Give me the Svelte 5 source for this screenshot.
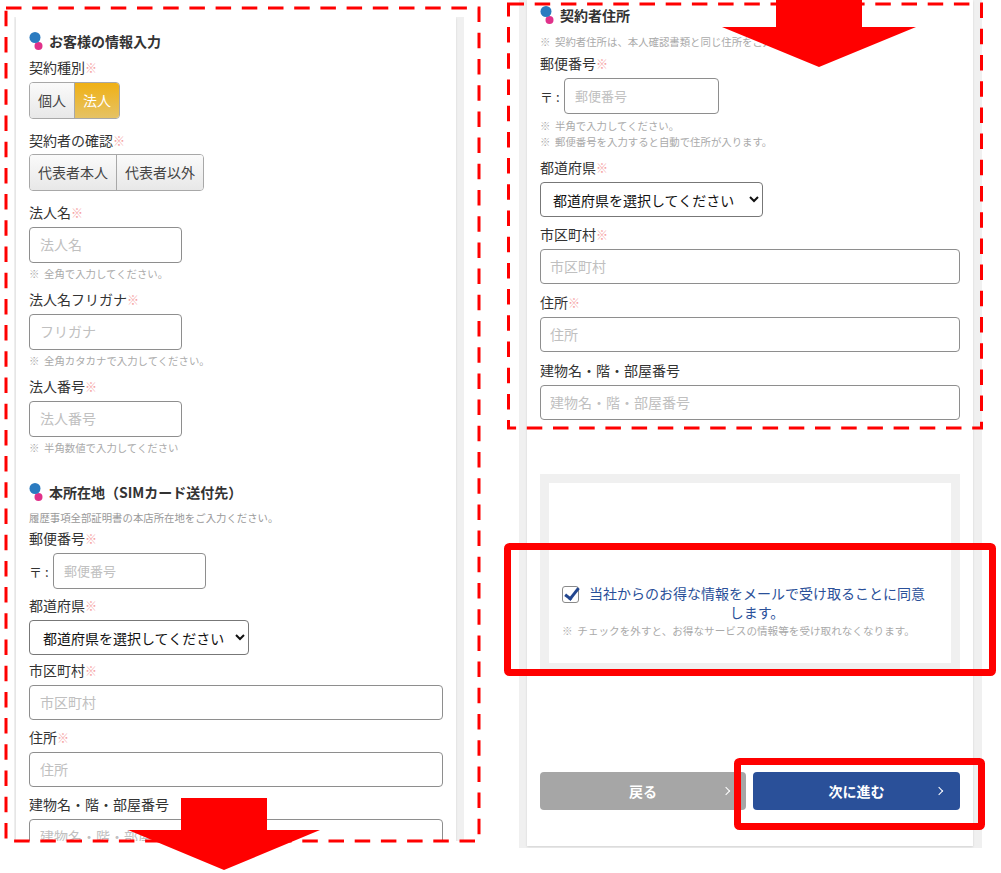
<script>
  let agreed = $state(true);
  let contractType = $state('corp');
</script>

{#snippet mark()}
  <svg class="mark" width="14" height="18" viewBox="0 0 14 18" aria-hidden="true">
    <circle cx="9.5" cy="14" r="4" fill="#e0318a" />
    <circle cx="6" cy="5.5" r="5.5" fill="#2b7bc0" />
  </svg>
{/snippet}

{#snippet heading(text)}
  <h2 class="heading">{@render mark()}{text}</h2>
{/snippet}

{#snippet label(text, required = true)}
  <div class="label">{text}{#if required}<span class="req">※</span>{/if}</div>
{/snippet}

{#snippet prefecture()}
  <select class="pref">
    <option>都道府県を選択してください</option>
  </select>
{/snippet}

{#snippet address()}
  {@render label('市区町村')}
  <input class="text" placeholder="市区町村" />
  {@render label('住所')}
  <input class="text" placeholder="住所" />
  {@render label('建物名・階・部屋番号', false)}
  <input class="text" placeholder="建物名・階・部屋番号" />
{/snippet}

<div class="page">
  <section class="panel left">
    <div class="sheet">
      {@render heading('お客様の情報入力')}
      {@render label('契約種別')}
      <div class="toggle">
        <button class:on={contractType === 'personal'} onclick={() => contractType = 'personal'}>個人</button>
        <button class:on={contractType === 'corp'} onclick={() => contractType = 'corp'}>法人</button>
      </div>
      <div class="label gap">契約者の確認<span class="req">※</span></div>
      <div class="toggle">
        <button>代表者本人</button>
        <button>代表者以外</button>
      </div>
      <div class="label gap wide">法人名<span class="req">※</span></div>
      <input class="text short" placeholder="法人名" />
      <p class="note">※&nbsp; 全角で入力してください。</p>
      {@render label('法人名フリガナ')}
      <input class="text short" placeholder="フリガナ" />
      <p class="note">※&nbsp; 全角カタカナで入力してください。</p>
      {@render label('法人番号')}
      <input class="text short" placeholder="法人番号" />
      <p class="note">※&nbsp; 半角数値で入力してください</p>

      <div class="section">
        {@render heading('本所在地（SIMカード送付先）')}
        <p class="note lead">履歴事項全部証明書の本店所在地をご入力ください。</p>
        {@render label('郵便番号')}
        <div class="zip">
          <span>〒 :</span>
          <input class="text short" placeholder="郵便番号" />
        </div>
        {@render label('都道府県')}
        {@render prefecture()}
        {@render address()}
      </div>
    </div>
  </section>

  <section class="panel right">
    <div class="sheet">
      {@render heading('契約者住所')}
      <p class="note lead">※&nbsp; 契約者住所は、本人確認書類と同じ住所をご入力ください。</p>
      {@render label('郵便番号')}
      <div class="zip">
        <span>〒 :</span>
        <input class="text short" placeholder="郵便番号" />
      </div>
      <p class="note first">※&nbsp; 半角で入力してください。</p>
      <p class="note">※&nbsp; 郵便番号を入力すると自動で住所が入ります。</p>
      {@render label('都道府県')}
      {@render prefecture()}
      {@render address()}

      <div class="optin">
        <div class="optin-inner">
          <label class="agree">
            <input type="checkbox" bind:checked={agreed} />
            <span>当社からのお得な情報をメールで受け取ることに同意します。</span>
          </label>
          <p class="note optin-note">※&nbsp; チェックを外すと、お得なサービスの情報等を受け取れなくなります。</p>
        </div>
      </div>

      <div class="actions">
        <button class="step back">戻る<span class="chev"></span></button>
        <button class="step next">次に進む<span class="chev"></span></button>
      </div>
    </div>
  </section>

  <!-- annotations drawn over the screenshot -->
  <svg class="marks" width="1001" height="873" viewBox="0 0 1001 873" aria-hidden="true">
    <rect x="6" y="8" width="473" height="833" fill="none" stroke="#f00" stroke-width="3" stroke-dasharray="15.5 10.7" />
    <rect x="508.500" y="4" width="473" height="424" fill="none" stroke="#f00" stroke-width="3" stroke-dasharray="15.5 10.7" />
    <rect x="507.500" y="546.500" width="485" height="126" rx="2" fill="none" stroke="#f00" stroke-width="7" />
    <rect x="737.500" y="761.500" width="244" height="65" rx="2" fill="none" stroke="#f00" stroke-width="7" />
    <polygon points="181,798 267,798 267,830 320,830 224,870 128,830 181,830" fill="#f00" />
    <polygon points="776,0 862,0 862,27 916,27 819,67 722,27 776,27" fill="#f00" />
  </svg>
</div>

<style>
  :global(body) { background: #fff; }
  .page { position: relative; display: flex; align-items: flex-start; width: 1001px; height: 873px; overflow: hidden; font-family: "Noto Sans CJK JP", "Noto Sans", sans-serif; font-size: 14px; color: #333; }

  .panel { background: #f0f0f0; overflow: hidden; box-sizing: border-box; }
  .panel.left { margin: 17px 0 0 14px; width: 450px; height: 824px; padding: 0 8px 0 2px; }
  .panel.right { margin-left: 55px; width: 463px; height: 848px; padding: 0 9px 2px 8px; }
  .sheet { background: #fff; height: 100%; box-sizing: border-box; box-shadow: 0 1px 2px rgba(0,0,0,0.12); }
  .left .sheet { padding: 14px 13px 0 13px; }
  .right .sheet { padding: 5px 13px 0 13px; }

  .heading { display: flex; align-items: center; height: 20px; margin: 0 0 6px; font-size: 14px; font-weight: 700; line-height: 20px; color: #333; }
  .mark { margin-right: 6px; flex: none; }
  .section { margin-top: 27px; }

  .label { height: 20px; line-height: 20px; margin-bottom: 5px; white-space: nowrap; }
  .label.gap { margin-top: 11px; margin-bottom: 4px; }
  .label.gap.wide { margin-bottom: 5px; }
  .req { color: #f5a3a3; font-size: 12px; }

  .toggle { display: inline-flex; vertical-align: top; height: 37px; border: 1px solid #a8a8a8; border-radius: 4px; box-sizing: border-box; overflow: hidden; }
  .toggle button { padding: 0 8px 2px; font: inherit; color: #444; background: linear-gradient(#fafafa, #e8e8e8); border: 0; border-left: 1px solid #a8a8a8; cursor: pointer; }
  .toggle button:first-child { border-left: 0; }
  .toggle button.on { color: #fff; background: linear-gradient(#f0b115, #e5c265); }

  .text { display: block; width: 100%; height: 35px; margin-bottom: 7px; padding: 0 10px 2px; box-sizing: border-box; font: inherit; color: #333; background: #fff; border: 1px solid #8e8e8e; border-radius: 4px; outline: none; }
  .right .text { margin-bottom: 8px; padding: 0 9px 2px; }
  .text::placeholder { color: #c0c0c0; }
  .text.short, .right .text.short { width: 153px; height: 36px; margin-bottom: 0; padding: 0 10px 2px; }
  .right .text.short { width: 155px; }

  .zip { display: flex; align-items: center; gap: 4px; margin-bottom: 6px; font-size: 13px; }
  .right .zip { margin-bottom: 0; }
  .zip span { width: 20px; white-space: nowrap; }

  .pref { display: block; width: 220px; height: 35px; margin: 1px 0 5px; padding: 0 0 0 9px; font: inherit; color: #111; background: #fff; border: 1px solid #777; border-radius: 4px; }
  .right .pref { width: 223px; margin: 0 0 7px; padding-left: 8px; }

  .note { margin: 4px 0 8px; height: 14px; font-size: 10.4px; line-height: 14px; color: #aaa; white-space: nowrap; }
  .note.lead { margin: 9px 0 3px; }
  .right .note.lead { margin: 10px 0 4px; }
  .right .note.first { margin: 5px 0 2px; }
  .right .note.first + .note { margin-top: 2px; }
  .left .section .note.lead { color: #999; }

  .optin { margin-top: 54px; border: 9px solid #f0f0f0; }
  .optin-inner { height: 180px; padding: 101px 25px 0 13px; box-sizing: border-box; }
  .agree { display: flex; align-items: flex-start; gap: 9px; color: #2a5099; line-height: 19px; text-align: center; }
  .agree input { position: relative; flex: none; appearance: none; width: 17px; height: 17px; margin: 2px 0 0; background: #fff; border: 1px solid #8a8a8a; border-radius: 3px; box-sizing: border-box; }
  .agree input:checked::after { content: ""; position: absolute; left: 5px; top: -2px; width: 5px; height: 12px; border-right: 3px solid #23468f; border-bottom: 3px solid #23468f; transform: rotate(38deg); }
  .optin-note { margin: 2px 0 0; font-size: 10.6px; }

  .actions { display: flex; gap: 7px; margin-top: 100px; }
  .step { position: relative; flex: 1; height: 38px; padding: 0; font: inherit; font-weight: 700; color: #fff; border: 0; border-radius: 4px; cursor: pointer; }
  .step.back { flex: none; width: 206px; background: #a6a6a6; }
  .step.next { background: #2a5099; }
  .chev { position: absolute; right: 18px; top: 16px; width: 5px; height: 5px; border-top: 1.5px solid #fff; border-right: 1.5px solid #fff; transform: rotate(45deg); }
  .back .chev { right: 17px; }

  .marks { position: absolute; left: 0; top: 0; pointer-events: none; }
</style>
